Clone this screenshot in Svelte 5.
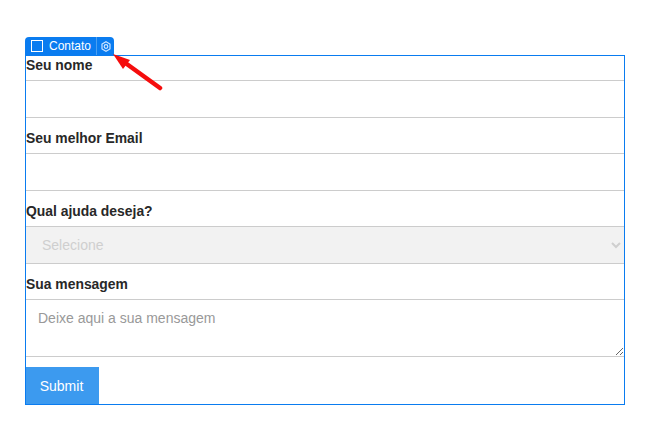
<script lang="ts">
  const fields = [
    { label: 'Seu nome', kind: 'input' },
    { label: 'Seu melhor Email', kind: 'input' },
    { label: 'Qual ajuda deseja?', kind: 'select' },
    { label: 'Sua mensagem', kind: 'textarea' }
  ]
</script>

<div class="page">
  <div class="block">
    <div class="tag">
      <span class="check"></span>
      <span class="name">Contato</span>
      <span class="gear">
        <svg width="10" height="11" viewBox="0 0 10 11" fill="none" stroke="#cfe5ff" stroke-width="1.2">
          <path d="M5 .8 9 3.1v4.8L5 10.2 1 7.900V3.100Z" />
          <circle cx="5" cy="5.500" r="1.800" />
        </svg>
      </span>
    </div>
    <svg class="arrow" width="52" height="40" viewBox="0 0 52 40">
      <path d="M49 35 13 9" stroke="#f50d0d" stroke-width="4.500" stroke-linecap="round" />
      <path d="M2 1 19 7 12 16Z" fill="#f50d0d" />
    </svg>
    <form>
      {#each fields as field}
        <label>
          <span class="label">{field.label}</span>
          {#if field.kind === 'input'}
            <input type="text" />
          {:else if field.kind === 'select'}
            <select disabled>
              <option>Selecione</option>
            </select>
          {:else}
            <textarea placeholder="Deixe aqui a sua mensagem"></textarea>
          {/if}
        </label>
      {/each}
      <button type="button">Submit</button>
    </form>
  </div>
</div>

<style>
  :global(body) {
    margin: 0;
    background: #fff;
  }

  .page {
    padding: 55px 23px 37px 25px;
    font-family: "Liberation Sans", Arial, sans-serif;
  }

  .block {
    position: relative;
  }

  .tag {
    position: absolute;
    left: 0;
    top: -18px;
    height: 18px;
    width: 89px;
    box-sizing: border-box;
    display: flex;
    align-items: center;
    background: #0a7cf0;
    border-radius: 4px 4px 0 0;
    color: #fff;
    font-size: 12px;
    padding-left: 6px;
  }

  .check {
    width: 10px;
    height: 10px;
    border: 1px solid #fff;
    flex-shrink: 0;
  }

  .name {
    margin-left: 6px;
    width: 47px;
    white-space: nowrap;
  }

  .gear {
    border-left: 1px solid #4b9ff0;
    height: 18px;
    padding-left: 4px;
    display: flex;
    align-items: center;
  }

  .arrow {
    position: absolute;
    left: 86px;
    top: -2px;
  }

  form {
    border: 1px solid #0a7cf0;
    display: flex;
    flex-direction: column;
    gap: 11px;
  }

  label {
    display: flex;
    flex-direction: column;
  }

  .label {
    font-size: 13.9px;
    font-weight: 700;
    color: #282828;
    height: 24px;
    line-height: 19px;
  }

  input,
  select,
  textarea {
    display: block;
    width: 100%;
    box-sizing: border-box;
    margin: 0;
    border: 1px solid #ccc;
    border-width: 1px 0;
    border-radius: 0;
    outline: none;
    font-family: inherit;
    font-size: 14px;
    background: #fff;
  }

  input {
    height: 38px;
  }

  select {
    height: 38px;
    padding: 0 12px;
    background: #f2f2f2;
    color: #cfcfcf;
    opacity: 1;
  }

  textarea {
    height: 58px;
    padding: 10px 12px;
    color: #333;
  }

  textarea::placeholder {
    color: #999;
  }

  button {
    width: 73px;
    height: 37px;
    margin-top: -1px;
    border: none;
    padding: 0 2px 0 0;
    background: #3c9aef;
    color: #fff;
    font-family: inherit;
    font-size: 14px;
  }
</style>
